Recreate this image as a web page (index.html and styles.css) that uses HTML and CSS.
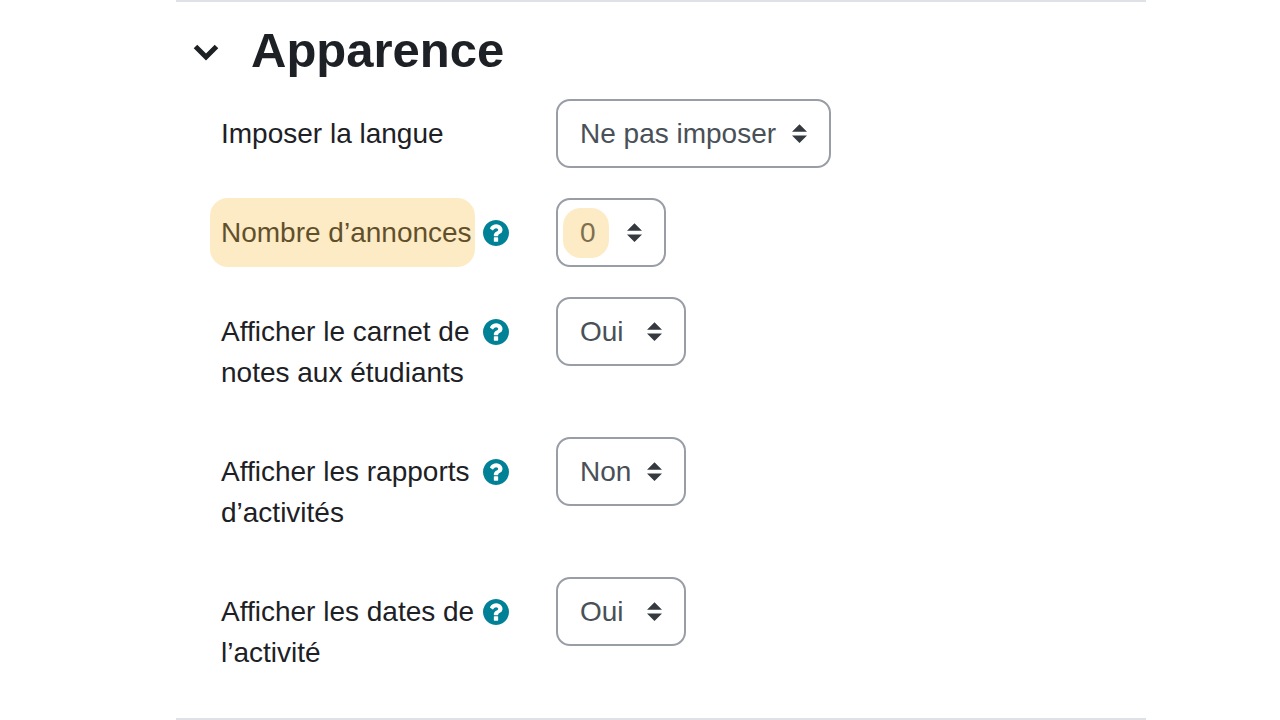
FILE: index.html
```
<!DOCTYPE html>
<html lang="fr">
<head>
    <meta charset="UTF-8">
    <meta name="viewport" content="width=device-width, initial-scale=1.0">
    <title>Apparence</title>
    <link rel="stylesheet" href="styles.css">
</head>
<body>
    <svg class="sprite" aria-hidden="true">
        <symbol id="help-icon" viewBox="128 128 1536 1536">
            <path d="M1024 1376v-192q0-14-9-23t-23-9h-192q-14 0-23 9t-9 23v192q0 14 9 23t23 9h192q14 0 23-9t9-23zm256-672q0-88-55.5-163t-138.5-116-170-41q-243 0-371 213-15 24 8 42l132 100q7 6 19 6 16 0 25-12 53-68 86-92 34-24 86-24 48 0 85.500 26t37.500 59q0 38-20 61t-68 45q-63 28-115.500 86.500t-52.500 125.500v36q0 14 9 23t23 9h192q14 0 23-9t9-23q0-19 21.500-49.500t54.500-49.500q32-18 49-28.500t46-35 44.500-48 28-60.500 12.500-81zm384 192q0 209-103 385.500t-279.500 279.500-385.500 103-385.500-103-279.500-279.500-103-385.500 103-385.500 279.500-279.500 385.500-103 385.500 103 279.500 279.500 103 385.500z"/>
        </symbol>
    </svg>

    <form class="settings">
        <section class="section">
            <div class="section-header">
                <button type="button" class="toggle" id="toggleBtn" aria-label="Apparence" aria-expanded="true" aria-controls="fields">
                    <svg viewBox="0 0 28 20"><path d="M3.500 5.500L14 16L24.500 5.500"/></svg>
                </button>
                <h1>Apparence</h1>
            </div>

            <div class="fields" id="fields">
                <div class="row">
                    <div class="row-label">
                        <label for="lang">Imposer la langue</label>
                    </div>
                    <select id="lang" class="select">
                        <option>Ne pas imposer</option>
                    </select>
                </div>

                <div class="row">
                    <div class="row-label">
                        <label for="news" class="highlight">Nombre d’annonces</label>
                        <button type="button" class="help" aria-label="Aide"><svg><use href="#help-icon"/></svg></button>
                    </div>
                    <div class="select-mark">
                        <select id="news" class="select">
                            <option>0</option>
                            <option>1</option>
                            <option>2</option>
                            <option>3</option>
                            <option>4</option>
                            <option>5</option>
                            <option>6</option>
                            <option>7</option>
                            <option>8</option>
                            <option>9</option>
                            <option>10</option>
                        </select>
                    </div>
                </div>

                <div class="row">
                    <div class="row-label">
                        <label for="grades">Afficher le carnet de notes aux étudiants</label>
                        <button type="button" class="help" aria-label="Aide"><svg><use href="#help-icon"/></svg></button>
                    </div>
                    <select id="grades" class="select">
                        <option>Non</option>
                        <option selected>Oui</option>
                    </select>
                </div>

                <div class="row">
                    <div class="row-label">
                        <label for="reports">Afficher les rapports d’activités</label>
                        <button type="button" class="help" aria-label="Aide"><svg><use href="#help-icon"/></svg></button>
                    </div>
                    <select id="reports" class="select">
                        <option selected>Non</option>
                        <option>Oui</option>
                    </select>
                </div>

                <div class="row">
                    <div class="row-label">
                        <label for="dates">Afficher les dates de l’activité</label>
                        <button type="button" class="help" aria-label="Aide"><svg><use href="#help-icon"/></svg></button>
                    </div>
                    <select id="dates" class="select">
                        <option>Non</option>
                        <option selected>Oui</option>
                    </select>
                </div>
            </div>
        </section>
    </form>

    <script>
        const toggleBtn = document.getElementById('toggleBtn');
        const fields = document.getElementById('fields');

        toggleBtn.addEventListener('click', () => {
            fields.hidden = !fields.hidden;
            toggleBtn.setAttribute('aria-expanded', String(!fields.hidden));
        });
    </script>
</body>
</html>
```

FILE: styles.css
```
* {
    box-sizing: border-box;
}
body {
    margin: 0;
    font-family: "Liberation Sans", Arial, sans-serif;
    font-size: 28px;
    line-height: 41px;
    color: #1d2125;
    background-color: #fff;
}
.sprite {
    display: none;
}
.settings {
    margin: 0 134px 0 176px;
}
.section {
    border-top: 2px solid #dee2e6;
    border-bottom: 2px solid #dee2e6;
}
.section-header {
    display: flex;
    align-items: center;
    gap: 31px;
    padding: 18px 16px;
}
h1 {
    margin: 0;
    font-size: 49px;
    line-height: 61px;
}
button {
    padding: 0;
    border: none;
    background: none;
    cursor: pointer;
}
.toggle {
    width: 28px;
    height: 20px;
}
.toggle svg {
    display: block;
    width: 28px;
    height: 20px;
    fill: none;
    stroke: #1d2125;
    stroke-width: 5;
}
.fields {
    padding: 0 0 1px 45px;
}
.row {
    display: flex;
    align-items: flex-start;
    gap: 47px;
    margin-bottom: 30px;
}
.row-label {
    display: flex;
    align-items: flex-start;
    justify-content: space-between;
    width: 288px;
}
.row-label label {
    padding: 14px 0;
}
.help {
    flex: none;
    height: 69px;
}
.help svg {
    display: block;
    width: 26px;
    height: 26px;
    fill: #008196;
}
.select {
    appearance: none;
    height: 69px;
    padding: 0 52px 0 22px;
    border: 2px solid #989da6;
    border-radius: 14px;
    font: inherit;
    color: #495057;
    background: #fff url("data:image/svg+xml,%3Csvg xmlns='http://www.w3.org/2000/svg' viewBox='0 0 4 5'%3E%3Cpath fill='%23343a40' d='M2 0L0 2h4zm0 5L0 3h4z'/%3E%3C/svg%3E") no-repeat right 22px center / 15px 19px;
}

/* translucent marker drawn over the text */
.highlight,
.select-mark {
    position: relative;
}
.highlight::after,
.select-mark::after {
    content: "";
    position: absolute;
    border-radius: 18px;
    background-color: rgba(248, 188, 62, 0.3);
    pointer-events: none;
}
.highlight::after {
    inset: 0 -3px 0 -11px;
}
.select-mark::after {
    top: 10px;
    left: 7px;
    width: 46px;
    height: 50px;
}
```
